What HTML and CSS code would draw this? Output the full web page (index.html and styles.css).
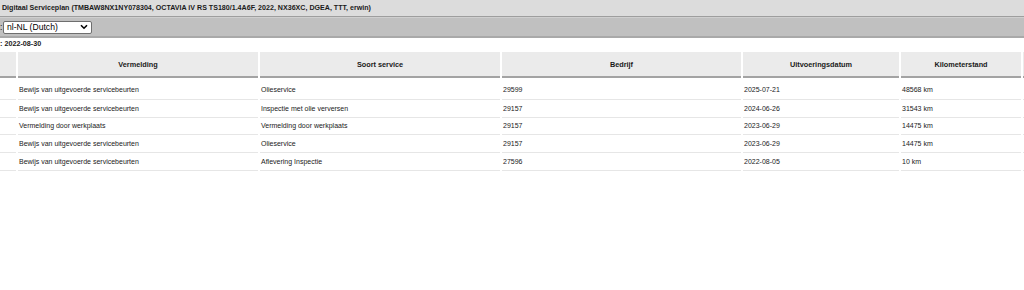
FILE: index.html
```html
<!DOCTYPE html>
<html lang="nl">
<head>
<meta charset="utf-8">
<title>Digitaal Serviceplan</title>
<link rel="stylesheet" href="styles.css">
</head>
<body>
<div class="titlebar">Digitaal Serviceplan (TMBAW8NX1NY078304, OCTAVIA iV RS TS180/1.4A6F, 2022, NX36XC, DGEA, TTT, erwin)</div>
<div class="toolbar">
  <span class="colon">:</span>
  <div class="select">
    <span>nl-NL (Dutch)</span>
    <svg class="chev" width="8" height="6" viewBox="0 0 8 6"><path d="M1 1.2 L4 4.2 L7 1.2" fill="none" stroke="#000" stroke-width="1.6"/></svg>
  </div>
</div>
<div class="dateline">: 2022-08-30</div>
<table class="grid">
  <colgroup>
    <col class="c0"><col class="c1"><col class="c2"><col class="c3"><col class="c4"><col class="c5"><col class="c6">
  </colgroup>
  <thead>
    <tr><th></th><th>Vermelding</th><th>Soort service</th><th>Bedrijf</th><th>Uitvoeringsdatum</th><th>Kilometerstand</th><th></th></tr>
  </thead>
  <tbody>
    <tr><td></td><td>Bewijs van uitgevoerde servicebeurten</td><td>Olieservice</td><td>29599</td><td>2025-07-21</td><td>48568 km</td><td></td></tr>
    <tr><td></td><td>Bewijs van uitgevoerde servicebeurten</td><td>Inspectie met olie verversen</td><td>29157</td><td>2024-06-26</td><td>31543 km</td><td></td></tr>
    <tr><td></td><td>Vermelding door werkplaats</td><td>Vermelding door werkplaats</td><td>29157</td><td>2023-06-29</td><td>14475 km</td><td></td></tr>
    <tr><td></td><td>Bewijs van uitgevoerde servicebeurten</td><td>Olieservice</td><td>29157</td><td>2023-06-29</td><td>14475 km</td><td></td></tr>
    <tr><td></td><td>Bewijs van uitgevoerde servicebeurten</td><td>Aflevering Inspectie</td><td>27596</td><td>2022-08-05</td><td>10 km</td><td></td></tr>
  </tbody>
</table>
</body>
</html>
```
FILE: styles.css
```css
html, body {
  margin: 0;
  padding: 0;
  background: #fff;
  overflow: hidden;
  font-family: "Liberation Sans", Arial, sans-serif;
  color: #1a1a1a;
}
.titlebar {
  height: 17px;
  line-height: 16px;
  background: #dcdcdc;
  border-bottom: 1px solid #9e9e9e;
  box-sizing: border-box;
  padding-left: 2px;
  font-size: 7.1px;
  font-weight: bold;
  white-space: nowrap;
}
.toolbar {
  height: 18px;
  background: #c0c0c0;
  border-top: 1px solid #cfcfcf;
  border-bottom: 2px solid #a9a9a9;
  display: flex;
  align-items: center;
}
.colon {
  font-size: 8.6px;
  width: 3px;
}
.select {
  width: 89px;
  height: 13px;
  box-sizing: border-box;
  background: #fff;
  border: 1px solid #6e6e6e;
  border-radius: 2px;
  display: flex;
  align-items: center;
  justify-content: space-between;
  padding: 0 3px;
  font-size: 8.6px;
  color: #000;
}
.chev { display: block; }
.dateline {
  font-size: 7.2px;
  font-weight: bold;
  height: 12px;
  line-height: 11px;
}
.grid {
  margin-left: -2px;
  margin-top: 2px;
  border-collapse: separate;
  border-spacing: 2px 0;
  table-layout: fixed;
  width: 1026px;
  font-size: 7px;
}
.c0 { width: 16px; }
.c1 { width: 240px; }
.c2 { width: 240px; }
.c3 { width: 239px; }
.c4 { width: 156px; }
.c5 { width: 120px; }
.c6 { width: 1px; }
.grid th {
  background: #ebebeb;
  height: 26px;
  padding: 0;
  border-bottom: 2px solid #a3a3a3;
  font-weight: bold;
  font-size: 7.3px;
  text-align: center;
  vertical-align: middle;
  box-sizing: border-box;
}
.grid td {
  height: 16.75px;
  padding: 0 0 0 1px;
  border-bottom: 1px solid #e6e6e6;
  text-align: left;
  vertical-align: middle;
  white-space: nowrap;
  overflow: hidden;
}
.grid td:first-child, .grid td:last-child { padding: 0; }
.grid tbody tr:first-child td { height: 18.75px; padding-top: 2px; }
```
